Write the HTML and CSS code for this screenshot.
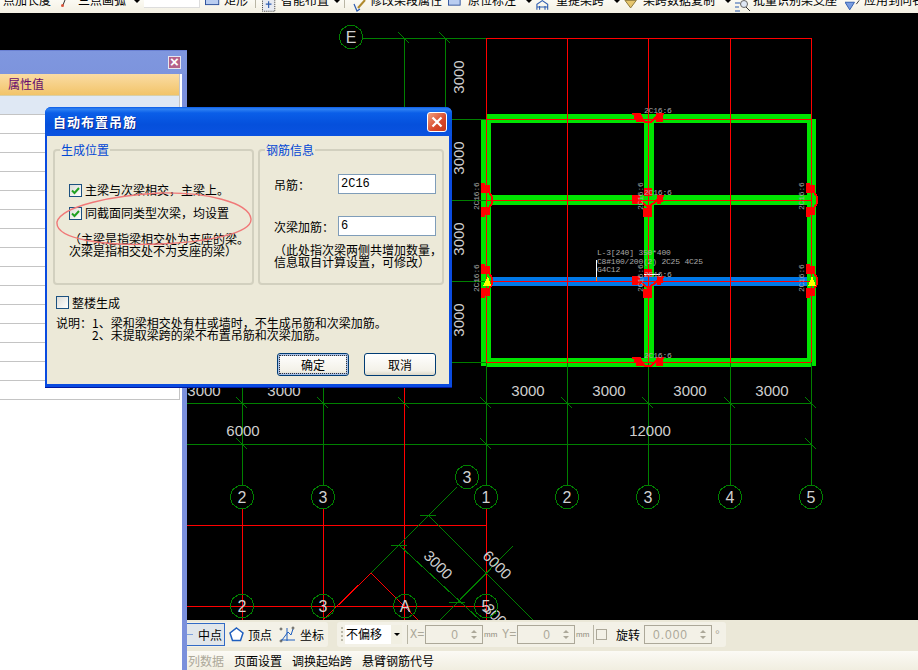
FILE: index.html
```html
<!DOCTYPE html>
<html lang="zh">
<head>
<meta charset="utf-8">
<title>自动布置吊筋</title>
<link rel="stylesheet" href="styles.css">
</head>
<body>
<div class="app">
  <div class="toolbar">
    <span class="tl">点加长度</span>
    <svg class="ti" viewBox="0 0 18 13"><path class="i-dark" d="M5 0 3 5"/><circle class="i-red" cx="2.500" cy="5.500" r="1.500"/></svg>
    <span class="tl">三点画弧</span>
    <i class="ar"></i>
    <span class="tinput"></span>
    <svg class="ti" viewBox="0 0 19 13"><rect class="i-rect" x="0.500" y="-6" width="14" height="10.500"/></svg>
    <span class="tl">矩形</span>
    <i class="tsep"></i>
    <svg class="ti" viewBox="0 0 19 13"><rect class="i-dot" x="0.500" y="-3" width="13" height="14.500"/><path class="i-blue" d="M4 4h6M7 1v7"/></svg>
    <span class="tl">智能布置</span>
    <i class="ar"></i>
    <i class="tsep"></i>
    <svg class="ti" viewBox="0 0 18 13"><path class="i-blue" d="M2 4 5 11 8 9"/><path class="i-gold" d="M6 8 13 0"/></svg>
    <span class="tl">修改梁段属性</span>
    <svg class="ti" viewBox="0 0 20 13"><rect class="i-rect" x="0.500" y="-6" width="13" height="11"/></svg>
    <span class="tl">原位标注</span>
    <i class="ar"></i>
    <svg class="ti" viewBox="0 0 20 13"><path class="i-blue" d="M1 10V4L7 0l6 4v6M4 10V6M10 10V6M1 7h12"/></svg>
    <span class="tl">重提梁跨</span>
    <i class="ar"></i>
    <svg class="ti" viewBox="0 0 19 13"><path class="i-goldfill" d="M1 0h12L7 8z"/></svg>
    <span class="tl">梁跨数据复制</span>
    <i class="ar"></i>
    <svg class="ti" viewBox="0 0 18 13"><path class="i-blue" d="M0 3h5M0 7h4M0 11h5"/><circle class="i-lens" cx="9" cy="4" r="3.500"/><path class="i-dark" d="M11 7l4 4"/></svg>
    <span class="tl">批量识别梁支座</span>
    <svg class="ti" viewBox="0 0 19 13"><path class="i-bluefill" d="M0 2h10L5 10z"/><path class="i-dark" d="M12 4l3-4"/></svg>
    <span class="tl">应用到同名梁</span>
  </div>

  <div class="main">
    <div class="leftcol">
      <div class="blackstrip"></div>
      <section class="panel">
        <div class="panel-title"><span class="panel-close">×</span></div>
        <div class="panel-inner">
          <div class="pgrid">
            <div class="phead">属性值</div>
            <div class="psub"></div>
            <div class="prow"></div><div class="prow"></div><div class="prow"></div><div class="prow"></div><div class="prow"></div>
            <div class="prow"></div><div class="prow"></div><div class="prow"></div><div class="prow"></div><div class="prow"></div>
            <div class="prow"></div><div class="prow"></div><div class="prow"></div><div class="prow"></div><div class="prow"></div>
          </div>
        </div>
      </section>
    </div>

    <div class="rightcol">
      <svg class="cad" viewBox="187 13 731 607" width="731" height="607">
        <defs>
          <polygon id="node" class="node" points="12,0 9.700,7 3.700,11.400 -3.700,11.400 -9.700,7 -12,0 -9.700,-7 -3.700,-11.400 3.700,-11.400 9.700,-7"/>
          <path id="tick" class="g" d="M-5.500 -5.500 5.500 5.500"/>
          <g id="jh" class="blob">
            <path d="M-16 -5h9v2h1v2h1v5h-7v-3h-2v-4h-2zM8 -5h8v2h-1v7H8z"/>
            <path class="redline" d="M-6 1l3 3h6l5-5"/>
          </g>
          <g id="jv" class="blob">
            <path d="M-5 -17h4v2h5v7h-1v1h-8zM-5 7h8v1h1v7h-5v2h-4z"/>
            <path class="redline" d="M3 -8 6 -3V3L3 8"/>
          </g>
          <g id="jm" class="blob">
            <path d="M-16 -5h8v9h-8zM9 -5h7v2h-1v5h-2v2H9zM-4 -12h8v8h-8zM-5 8h4v-2h5v11h-9z"/>
            <path class="redline" d="M-8 1 0 7M9 0 1 7"/>
          </g>
        </defs>

        <g class="frame">
          <rect x="481" y="119" width="10" height="247"/>
          <rect x="644" y="119" width="10" height="247"/>
          <rect x="807" y="119" width="9" height="247"/>
          <rect x="487" y="114" width="324" height="9"/>
          <rect x="487" y="195" width="324" height="10"/>
          <rect x="487" y="358" width="324" height="9"/>
          <rect class="bluebeam" x="491" y="277" width="316" height="9"/>
        </g>

        <path class="g" d="M363 38H486M404 38V403M445 38V362M404 119H486M404 200H486M404 281H486M404 362H486M187 403H811M187 444H811"/>
        <path class="g" d="M242 385V485M323 385V485M486 362V485M567 362V485M648 362V485M730 362V485M811 362V485"/>
        <path class="r" d="M486 38H811M486 38V362M567 38V362M648 38V362M730 38V362M811 38V362M486 119H811M486 200H811M486 281H811M486 362H811"/>
        <path class="r" d="M404 387V620M187 525H486M187 606H486M242 509V620M323 509V620M486 509V620"/>

        <use href="#tick" x="404" y="38"/><use href="#tick" x="445" y="38"/>
        <use href="#tick" x="445" y="119"/><use href="#tick" x="445" y="200"/>
        <use href="#tick" x="445" y="281"/><use href="#tick" x="445" y="362"/>
        <use href="#tick" x="242" y="403"/><use href="#tick" x="323" y="403"/><use href="#tick" x="404" y="403"/>
        <use href="#tick" x="486" y="403"/><use href="#tick" x="567" y="403"/><use href="#tick" x="648" y="403"/>
        <use href="#tick" x="730" y="403"/><use href="#tick" x="811" y="403"/>
        <use href="#tick" x="242" y="444"/><use href="#tick" x="486" y="444"/><use href="#tick" x="811" y="444"/>

        <path class="g" d="M457 487 371 573M428 515 533 620M399 545 480 620M513 546 440 620M420 515H436M391 545H407M449 602H465"/>
        <path class="r" d="M371 573 323 620M371 573 418 620"/>

        <use href="#jh" x="648" y="118"/><use href="#jh" x="648" y="362"/>
        <use href="#jm" x="648" y="200"/><use href="#jm" x="648" y="281"/>
        <use href="#jv" x="486" y="200"/><use href="#jv" x="811" y="200"/>
        <use href="#jv" x="486" y="281"/><use href="#jv" x="811" y="281"/>
        <path class="yellow" d="M488 276 491 286H483zM812 276 816 286H808z"/>
        <path class="white" d="M596.500 260V277"/>
        <path class="orange" d="M596.500 277V281"/>
        <path class="white" d="M644 274H660"/>

        <g class="tiny">
          <text x="644" y="113">2C16:6</text>
          <text x="644" y="195">2C16:6</text>
          <text x="644" y="277">2C16:6</text>
          <text x="644" y="358">2C16:6</text>
          <text transform="translate(479 210) rotate(-90)">2C16:6</text>
          <text transform="translate(804 210) rotate(-90)">2C16:6</text>
          <text transform="translate(479 292) rotate(-90)">2C16:6</text>
          <text transform="translate(804 292) rotate(-90)">2C16:6</text>
          <text transform="translate(643 210) rotate(-90)">2C16:6</text>
          <text transform="translate(643 292) rotate(-90)">2C16:6</text>
          <text x="597" y="255">L-3[240] 350*400</text>
          <text x="597" y="264">C8#100/200(2) 2C25 4C25</text>
          <text x="597" y="272">G4C12</text>
        </g>

        <g class="dim">
          <text transform="translate(464 77) rotate(-90)">3000</text>
          <text transform="translate(464 158) rotate(-90)">3000</text>
          <text transform="translate(464 239) rotate(-90)">3000</text>
          <text transform="translate(464 320) rotate(-90)">3000</text>
          <text x="204" y="396">3000</text><text x="284" y="396">3000</text>
          <text x="528" y="396">3000</text><text x="609" y="396">3000</text>
          <text x="690" y="396">3000</text><text x="772" y="396">3000</text>
          <text x="243" y="436">6000</text><text x="650" y="436">12000</text>
          <text transform="translate(438 565) rotate(45)" y="5">3000</text>
          <text transform="translate(497 565) rotate(45)" y="5">6000</text>
          <text transform="translate(498 618) rotate(45)" y="5">3000</text>
        </g>

        <g>
          <use href="#node" x="351" y="37"/><use href="#node" x="242" y="497"/><use href="#node" x="323" y="497"/>
          <use href="#node" x="486" y="497"/><use href="#node" x="567" y="497"/><use href="#node" x="648" y="497"/>
          <use href="#node" x="730" y="497"/><use href="#node" x="811" y="497"/><use href="#node" x="467" y="477"/>
          <use href="#node" x="242" y="606"/><use href="#node" x="323" y="606"/><use href="#node" x="405" y="606"/><use href="#node" x="486" y="606"/>
        </g>
        <g class="label">
          <text x="351" y="43">E</text><text x="242" y="503">2</text><text x="323" y="503">3</text>
          <text x="486" y="503">1</text><text x="567" y="503">2</text><text x="648" y="503">3</text>
          <text x="730" y="503">4</text><text x="811" y="503">5</text><text x="467" y="483">3</text>
          <text x="242" y="612">2</text><text x="323" y="612">3</text><text x="405" y="612">A</text><text x="486" y="612">5</text>
        </g>
      </svg>

      <div class="snapbar">
        <div class="band band-a">
          <div class="snap-on"><i class="dash"></i><span>中点</span></div>
          <svg class="snapicon" viewBox="0 0 15 15"><path class="pent" d="M7.500 1 14 6 11.500 13.500H3.500L1 6z"/></svg>
          <span class="snaptext">顶点</span>
          <svg class="coordicon" viewBox="0 0 17 17"><path class="pent thin" d="M3 14 9 6l3 3 2-6M2 14h14M8 2v13"/><circle class="cdot" cx="2" cy="3" r="1"/><circle class="cdot" cx="14" cy="2" r="1"/><circle class="cdot" cx="2" cy="15" r="1"/></svg>
          <span class="snaptext">坐标</span>
        </div>
        <div class="band band-b">
          <i class="grip"></i>
          <div class="combo"><span class="combo-v">不偏移</span><span class="combo-btn"><i class="ar2"></i></span></div>
          <i class="vsep"></i>
          <span class="axis">X=</span>
          <div class="spin spin-xy"><span>0</span><b class="spinb"><i class="up"></i><i class="dn"></i></b></div>
          <span class="unit">mm</span>
          <span class="axis axis-y">Y=</span>
          <div class="spin spin-xy"><span>0</span><b class="spinb"><i class="up"></i><i class="dn"></i></b></div>
          <span class="unit">mm</span>
          <i class="vsep vsep-b"></i>
          <span class="snapcheck"></span>
          <span class="rotlabel">旋转</span>
          <div class="spin spin-rot"><span>0.000</span><b class="spinb"><i class="up"></i><i class="dn"></i></b></div>
          <span class="deg">°</span>
        </div>
      </div>

      <div class="tabbar">
        <span class="tab-off">列数据</span>
        <span>页面设置</span>
        <span>调换起始跨</span>
        <span>悬臂钢筋代号</span>
      </div>
    </div>
  </div>

  <section class="dialog">
    <header class="dlg-title">
      <span class="dlg-caption">自动布置吊筋</span>
      <span class="dlg-close"><svg viewBox="0 0 20 20"><path class="closex" d="M5 5 15 15M15 5 5 15"/></svg></span>
    </header>
    <div class="dlg-body">
      <div class="groups">
        <fieldset class="group group-a">
          <legend>生成位置</legend>
          <div class="chk chk-first"><span class="box on"><svg viewBox="0 0 11 11"><path class="tick" d="M2 5.500 4.500 8 9 3"/></svg></span><span>主梁与次梁相交，主梁上。</span></div>
          <div class="chk chk-second"><span class="box on"><svg viewBox="0 0 11 11"><path class="tick" d="M2 5.500 4.500 8 9 3"/></svg></span><span>同截面同类型次梁，均设置</span></div>
          <p class="note note-a">（主梁是指梁相交处为支座的梁。<br>次梁是指相交处不为支座的梁）</p>
        </fieldset>
        <fieldset class="group group-b">
          <legend>钢筋信息</legend>
          <div class="field field-first"><label>吊筋：</label><span class="textbox">2C16</span></div>
          <div class="field field-second"><label>次梁加筋：</label><span class="textbox">6</span></div>
          <p class="note note-b">（此处指次梁两侧共增加数量，<br>信息取自计算设置，可修改）</p>
        </fieldset>
      </div>
      <div class="chk chk-whole"><span class="box"></span><span>整楼生成</span></div>
      <div class="desc">
        <span class="desc-l">说明：</span>
        <p class="desc-t">1、梁和梁相交处有柱或墙时，不生成吊筋和次梁加筋。<br>2、未提取梁跨的梁不布置吊筋和次梁加筋。</p>
      </div>
      <div class="buttons">
        <button class="btn btn-default" type="button"><span>确定</span></button>
        <button class="btn" type="button"><span>取消</span></button>
      </div>
    </div>
    <svg class="annot" viewBox="0 0 200 56"><path class="annot-l" d="M2 30C6 14 60 3 105 1 150 0 194 10 196 27 197 42 150 50 105 52 50 54 0 48 2 30Z"/></svg>
  </section>
</div>
</body>
</html>
```
FILE: styles.css
```css
* { box-sizing: border-box; }
html, body { margin: 0; padding: 0; background: #000; }
body { font-family: "Noto Sans CJK SC", "Noto Sans", sans-serif; font-size: 12px; color: #000; }
.app { position: relative; width: 918px; height: 670px; overflow: hidden; display: flex; flex-direction: column; }
p { margin: 0; }

/* top toolbar */
.toolbar {
  height: 13px; flex: none; overflow: hidden; padding-left: 3px;
  background: linear-gradient(#fbfaf3, #f3f0e3);
  display: grid; align-items: start;
  grid-template-columns: 57px 18px 56px 10px 61px 19px 31px 7px 19px 53px 10px 8px 18px 78px 20px 58px 10px 20px 58px 10px 19px 82px 10px 18px 92px 19px 60px;
}
.tl { display: block; line-height: 12px; margin-top: -6px; white-space: nowrap; font-size: 12px; }
.ti { width: 18px; height: 13px; display: block; }
.ar { width: 0; height: 0; margin-top: 0; border: 3px solid transparent; border-top-color: #000; border-bottom: 0; display: block; }
.tinput { display: block; width: 56px; height: 8px; background: #fff; border-right: 1px solid #ddd; border-bottom: 1px solid #ddd; }
.tsep { display: block; width: 1px; height: 8px; background: #b9b6a5; }
.i-dark { fill: none; stroke: #333; stroke-width: 1; }
.i-red { fill: #d9533a; }
.i-rect { fill: #b9cdf0; stroke: #2a4f9a; }
.i-dot { fill: #e7eaf1; stroke: #333; stroke-dasharray: 1 1; }
.i-blue { fill: none; stroke: #2d5cb0; stroke-width: 1.200; }
.i-gold { fill: none; stroke: #b08a2e; stroke-width: 2; }
.i-goldfill { fill: #e6c66e; stroke: #8a7434; }
.i-bluefill { fill: #7a9ee0; stroke: #2d5cb0; }
.i-lens { fill: #dfe8f5; stroke: #666; }

/* layout */
.main { flex: 1; display: flex; min-height: 0; }
.leftcol { width: 187px; flex: none; display: flex; flex-direction: column; }
.blackstrip { height: 37px; flex: none; background: #000; }
.rightcol { flex: 1; display: flex; flex-direction: column; min-width: 0; }

/* property panel */
.panel {
  flex: 1; display: flex; flex-direction: column; padding-right: 5px;
  background: linear-gradient(90deg, #7b90dc, #7b90dc);
  border-top: 1px solid #6a80d2;
}
.panel-title { height: 23px; flex: none; background: linear-gradient(#7f97df, #7d94dd); display: flex; justify-content: flex-end; align-items: flex-start; padding: 5px 6px 0 0; margin-right: -5px; }
.panel-close {
  width: 13px; height: 13px; background: #b5628a; border: 1px solid #e6e6f0; color: #fff;
  font: bold 15px/10px "Liberation Sans", sans-serif; text-align: center;
}
.panel-inner { flex: 1; background: #fff; padding-right: 2px; }
.pgrid { border-right: 1px solid #c4c4c4; display: flex; flex-direction: column; }
.phead { height: 22px; background: linear-gradient(#fadca4, #f2c469); color: #660a6e; padding-left: 8px; font-size: 12px; line-height: 20px; border-bottom: 1px solid #d8cfa8; }
.psub { height: 19px; background: #dfe8f4; border-bottom: 1px solid #c4c4c4; }
.prow { height: 19px; background: #fff; border-bottom: 1px solid #c4c4c4; }

/* CAD drawing */
.cad { display: block; flex: none; background: #000; shape-rendering: crispEdges; }
.g { stroke: #008000; stroke-width: 1; fill: none; }
.r { stroke: #ff0000; stroke-width: 1; fill: none; }
.node { fill: none; stroke: #008000; stroke-width: 1; }
.frame rect { fill: #00e400; }
.frame .bluebeam { fill: #0078e8; }
.blob { fill: #ff0000; }
.redline { fill: none; stroke: #ff0000; stroke-width: 2; }
.yellow { fill: #ffff00; }
.white { stroke: #fff; stroke-width: 1; fill: none; }
.orange { stroke: #f07a10; stroke-width: 1; fill: none; }
.tiny text { font: 8px "Liberation Mono", monospace; fill: #a8a8a8; letter-spacing: -0.200px; }
.dim text { font: 15px "Liberation Sans", sans-serif; fill: #cfcfcf; text-anchor: middle; }
.label text { font: 16px "Liberation Sans", sans-serif; fill: #d0d0d0; text-anchor: middle; }

/* snap bar */
.snapbar { height: 31px; flex: none; background: #ebe8d8; display: flex; align-items: flex-start; padding-top: 2px; }
.band { height: 25px; background: #f3f1e7; display: flex; align-items: center; border-radius: 0 3px 3px 0; flex: none; }
.band > * { flex: none; white-space: nowrap; }
.band-a { width: 141px; }
.band-b { width: 389px; margin-left: 9px; border-radius: 3px; padding-left: 4px; }
.snap-on { width: 38px; height: 23px; background: #e1e6ea; border: 1px solid #316ac5; border-left: 0; display: flex; align-items: center; }
.dash { width: 6px; height: 1px; background: #7fa2dc; margin-right: 5px; }
.snapicon { width: 15px; height: 15px; margin-left: 4px; }
.coordicon { width: 17px; height: 17px; margin-left: 7px; }
.snaptext { margin-left: 4px; font-size: 12px; }
.pent { fill: #fff; stroke: #1f5fbf; stroke-width: 1.500; }
.pent.thin { fill: none; stroke-width: 1; }
.cdot { fill: none; stroke: #333; stroke-width: 0.800; }
.grip { width: 2px; height: 16px; margin-right: 2px; background: repeating-linear-gradient(#bbb8a8 0 2px, transparent 2px 4px); }
.combo { width: 57px; height: 19px; background: #fff; display: flex; justify-content: space-between; }
.combo-v { padding-left: 1px; line-height: 18px; font-size: 12px; }
.combo-btn { width: 11px; background: #f1efe2; display: flex; align-items: center; justify-content: center; }
.ar2 { width: 0; height: 0; border: 3px solid transparent; border-top-color: #000; border-bottom: 0; }
.vsep { width: 1px; height: 19px; background: #b8b5a5; margin: 0 2px 0 5px; }
.vsep-b { margin-left: 2px; }
.axis { width: 15px; color: #aca899; font: 12px "Liberation Mono", monospace; }
.axis-y { margin-left: 3px; }
.spin { height: 19px; border: 1px solid #aca899; display: flex; align-items: center; justify-content: flex-end; color: #aca899; font: 12px "Liberation Sans", sans-serif; letter-spacing: 1px; }
.spin-xy { width: 58px; }
.spin-rot { width: 68px; }
.spinb { width: 17px; margin-left: 6px; height: 17px; display: flex; flex-direction: column; align-items: center; justify-content: space-around; padding: 2px 0; }
.up, .dn { width: 0; height: 0; border: 3px solid transparent; }
.up { border-top: 0; border-bottom-color: #aca899; }
.dn { border-bottom: 0; border-top-color: #aca899; }
.unit { width: 15px; margin-left: 1px; color: #8f8b7c; font: 8px/12px "Liberation Sans", sans-serif; }
.snapcheck { width: 11px; height: 11px; border: 1px solid #aca899; background: #f3f1e7; }
.rotlabel { margin: 0 4px 0 9px; font-size: 12px; }
.deg { margin-left: 3px; color: #aca899; font: 12px "Liberation Sans", sans-serif; }

/* tab bar */
.tabbar { height: 19px; flex: none; background: linear-gradient(#fbfaf5, #f1eee0); display: flex; gap: 10px; align-items: center; padding-left: 1px; font-size: 12px; line-height: 19px; }
.tab-off { color: #aca899; width: 36px; overflow: hidden; white-space: nowrap; }

/* dialog */
.dialog {
  position: absolute; left: 45px; top: 107px; width: 407px; height: 281px;
  background: #0a4be0; border-radius: 6px 6px 0 0; padding: 0 3px 3px 2px;
  display: flex; flex-direction: column;
  border-bottom: 1px solid #0018a0;
}
.dlg-title {
  height: 29px; flex: none; display: flex; justify-content: space-between; align-items: center;
  background: linear-gradient(#0a5ae6 0, #2f82f3 2px, #0a5ee8 6px, #0550dc 60%, #0a52e0 100%);
  margin: 0 -3px 0 -2px; padding: 0 5px 0 8px; border-radius: 6px 6px 0 0;
}
.dlg-caption { color: #fff; font-weight: 700; font-size: 13px; text-shadow: 1px 1px 0 #0a2a90; letter-spacing: 1px; }
.dlg-close { width: 20px; height: 20px; border: 1px solid #fff; border-radius: 3px; background: linear-gradient(135deg, #f0a080, #d8482a 60%, #c83a1c); display: block; }
.dlg-close svg { display: block; width: 18px; height: 18px; }
.closex { stroke: #fff; stroke-width: 2.500; fill: none; }
.dlg-body { flex: 1; background: #ece9d8; padding: 7px 13px 0 9px; display: flex; flex-direction: column; min-height: 0; }
.groups { display: flex; gap: 4px; margin-left: -3px; margin-right: -8px; height: 142px; flex: none; }
.group { margin: 0; border: 2px solid #d2d0bf; border-radius: 4px; min-width: 0; height: 142px; display: block; }
.group-a { width: 201px; padding: 0 6px 0 14px; }
.group-b { width: 186px; padding: 0 6px 0 14px; }
legend { color: #0046d5; font-size: 12px; line-height: 14px; padding: 0 1px; margin-left: -9px; }
.chk { display: flex; align-items: center; gap: 3px; height: 14px; font-size: 12px; line-height: 14px; white-space: nowrap; }
.chk-first { margin-top: 26px; }
.chk-second { margin-top: 9px; }
.chk-whole { margin-top: 10px; height: 15px; }
.box { width: 13px; height: 13px; flex: none; border: 1px solid #1c5180; background: linear-gradient(135deg, #dcdcd7, #fff); display: block; }
.box svg { display: block; width: 11px; height: 11px; }
.tick { stroke: #21a121; stroke-width: 2; fill: none; }
.note { font-size: 12px; line-height: 12px; white-space: nowrap; }
.note-a { margin-top: 13px; }
.note-b { margin-top: 8px; }
.field { display: flex; align-items: center; height: 20px; }
.field label { width: 64px; flex: none; white-space: nowrap; }
.field-first { margin-top: 17px; }
.field-second { margin-top: 22px; }
.textbox { width: 98px; height: 20px; background: #fff; border: 1px solid #7f9db9; padding-left: 2px; font: 12px/18px "Liberation Mono", monospace; }
.desc { display: flex; margin-top: 7px; font-size: 12px; line-height: 12px; }
.desc-l { width: 36px; flex: none; }
.buttons { display: flex; justify-content: flex-end; gap: 15px; margin-top: 12px; }
.btn {
  width: 72px; height: 23px; padding: 0; border: 1px solid #003c74; border-radius: 3px;
  background: linear-gradient(#fff, #f3f1e8 80%, #dcd8c8); font: 12px "Noto Sans CJK SC", sans-serif; color: #000;
  display: flex; align-items: center; justify-content: center;
}
.btn-default { box-shadow: inset 0 0 0 2px #a9c0e6; outline: 1px dotted #333; outline-offset: -3px; }
.annot { position: absolute; left: 10px; top: 85px; width: 200px; height: 56px; }
.annot-l { fill: none; stroke: #f07878; stroke-width: 1.400; }
```
